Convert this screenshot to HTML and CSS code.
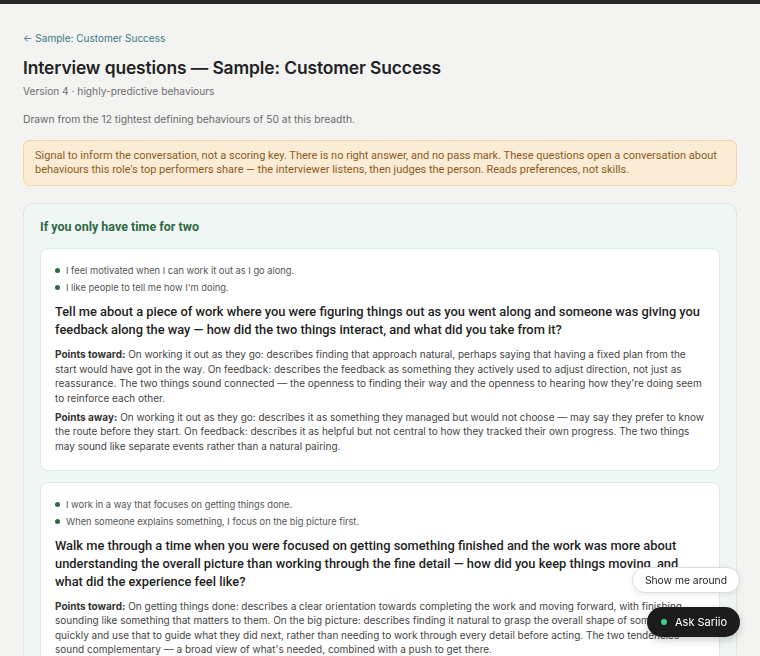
FILE: index.html
```html
<!DOCTYPE html>
<html lang="en">
<head>
<meta charset="UTF-8" />
<meta name="viewport" content="width=device-width, initial-scale=1" />
<title>Interview questions — Sample: Customer Success</title>
<link rel="stylesheet" href="styles.css">
</head>
<body>

<div class="topbar"></div>

<main class="page">
  <a class="back" href="#">← Sample: Customer Success</a>
  <h1>Interview questions — Sample: Customer Success</h1>
  <p class="meta">Version 4 · highly-predictive behaviours</p>
  <p class="source">Drawn from the 12 tightest defining behaviours of 50 at this breadth.</p>

  <div class="notice">
    Signal to inform the conversation, not a scoring key. There is no right answer, and no pass mark. These questions open a conversation about behaviours this role's top performers share — the interviewer listens, then judges the person. Reads preferences, not skills.
  </div>

  <section class="shortlist">
    <h2>If you only have time for two</h2>

    <article class="question">
      <ul class="statements">
        <li>I feel motivated when I can work it out as I go along.</li>
        <li>I like people to tell me how I'm doing.</li>
      </ul>
      <h3>Tell me about a piece of work where you were figuring things out as you went along and someone was giving you feedback along the way — how did the two things interact, and what did you take from it?</h3>
      <p class="signal"><strong>Points toward:</strong> On working it out as they go: describes finding that approach natural, perhaps saying that having a fixed plan from the start would have got in the way. On feedback: describes the feedback as something they actively used to adjust direction, not just as reassurance. The two things sound connected — the openness to finding their way and the openness to hearing how they're doing seem to reinforce each other.</p>
      <p class="signal"><strong>Points away:</strong> On working it out as they go: describes it as something they managed but would not choose — may say they prefer to know the route before they start. On feedback: describes it as helpful but not central to how they tracked their own progress. The two things may sound like separate events rather than a natural pairing.</p>
    </article>

    <article class="question">
      <ul class="statements">
        <li>I work in a way that focuses on getting things done.</li>
        <li>When someone explains something, I focus on the big picture first.</li>
      </ul>
      <h3>Walk me through a time when you were focused on getting something finished and the work was more about understanding the overall picture than working through the fine detail — how did you keep things moving, and what did the experience feel like?</h3>
      <p class="signal"><strong>Points toward:</strong> On getting things done: describes a clear orientation towards completing the work and moving forward, with finishing sounding like something that matters to them. On the big picture: describes finding it natural to grasp the overall shape of something quickly and use that to guide what they did next, rather than needing to work through every detail before acting. The two tendencies sound complementary — a broad view of what's needed, combined with a push to get there.</p>
      <p class="signal"><strong>Points away:</strong> On getting things done: describes finishing as less important than exploring. On the big picture: prefers to start from the detail.</p>
    </article>
  </section>
</main>

<div class="helper">
  <button class="tour">Show me around</button>
  <button class="ask"><span class="dot"></span>Ask Sariio</button>
</div>

</body>
</html>
```

FILE: styles.css
```css
/* Base */
* {
  box-sizing: border-box;
}

html, body {
  height: 100%;
}

body {
  margin: 0;
  font-family: Inter, "Noto Sans", sans-serif;
  background: #f3f3f2;
  color: #1f1f1f;
  overflow: hidden;
}

.topbar {
  height: 4px;
  background: #262626;
}

.page {
  padding: 27px 23px 0 23px;
}

.back {
  display: block;
  font-size: 10px;
  line-height: 14px;
  color: #3b7785;
  text-decoration: none;
}

h1 {
  margin: 12px 0 0;
  font-size: 17.4px;
  line-height: 22px;
  font-weight: 600;
  letter-spacing: -0.1px;
  color: #222;
}

.meta {
  margin: 5px 0 0;
  font-size: 10.2px;
  line-height: 14px;
  color: #6f6f6f;
}

.source {
  margin: 14px 0 0;
  font-size: 10.3px;
  line-height: 14px;
  color: #6a6a6a;
}

/* Amber notice */
.notice {
  margin-top: 14px;
  padding: 8px 11px;
  background: #fcecd6;
  border: 1px solid #f3d6a8;
  border-radius: 7px;
  font-family: Roboto, sans-serif;
  font-size: 11px;
  line-height: 14px;
  color: #8a5a22;
}

/* Shortlist block */
.shortlist {
  margin-top: 17px;
  padding: 15px 16px 16px;
  background: #eff6f3;
  border: 1px solid #d6e8e0;
  border-radius: 10px;
}

.shortlist h2 {
  margin: 0 0 13px;
  font-family: Roboto, sans-serif;
  font-size: 12.5px;
  line-height: 16px;
  font-weight: 700;
  color: #2e6a45;
}

.question {
  background: #fff;
  border: 1px solid #d9ebe4;
  border-radius: 8px;
  padding: 13px 14px 16px;
  margin-bottom: 11px;
}

.statements {
  list-style: none;
  margin: 0;
  padding: 0;
}

.statements li {
  display: flex;
  align-items: center;
  gap: 6px;
  font-size: 9.3px;
  line-height: 17px;
  color: #555;
}

.statements li::before {
  content: "";
  flex: none;
  width: 5px;
  height: 5px;
  border-radius: 50%;
  background: #2e6a45;
}

.question h3 {
  margin: 7px 0 8px;
  font-family: Roboto, sans-serif;
  font-size: 12.85px;
  font-weight: 500;
  line-height: 18px;
  color: #1e1e1e;
}

.signal {
  margin: 0;
  font-size: 10px;
  line-height: 14.6px;
  color: #444;
}

.signal + .signal {
  margin-top: 4.5px;
}

.signal strong {
  font-weight: 700;
  color: #333;
}

/* Floating helper buttons */
.helper {
  position: fixed;
  right: 20px;
  bottom: 19px;
  display: flex;
  flex-direction: column;
  align-items: flex-end;
  gap: 14px;
}

.helper button {
  font-family: Inter, sans-serif;
  border-radius: 999px;
  cursor: pointer;
}

.tour {
  height: 26px;
  padding: 0 12px;
  background: #fff;
  border: 1px solid #dcdcdc;
  box-shadow: 0 2px 6px rgba(0, 0, 0, 0.08);
  font-size: 10.3px;
  color: #222;
}

.ask {
  display: flex;
  align-items: center;
  gap: 8px;
  height: 30px;
  padding: 0 13px 0 14px;
  background: #1c1c1c;
  border: none;
  box-shadow: 0 3px 8px rgba(0, 0, 0, 0.2);
  font-size: 11px;
  color: #fff;
}

.ask .dot {
  width: 6px;
  height: 6px;
  border-radius: 50%;
  background: #3ecf8e;
}
```
